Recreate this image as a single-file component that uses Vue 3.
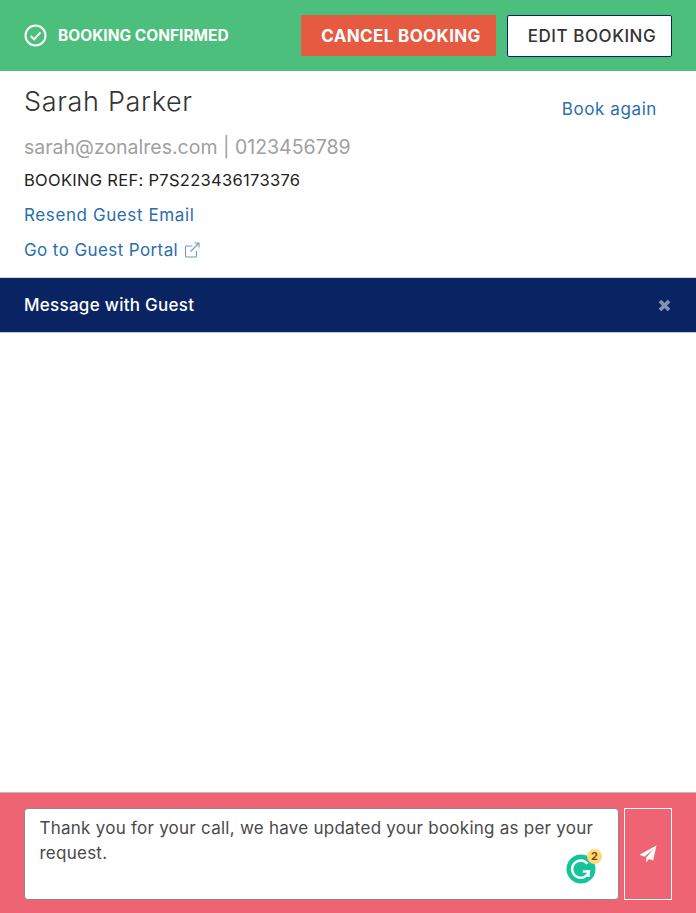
<template>
  <div class="page">
    <header class="status-bar">
      <div class="status">
        <svg class="check" viewBox="0 0 24 24" width="24" height="24" fill="none" stroke="#fff">
          <circle cx="11.5" cy="11.5" r="10" stroke-width="2" />
          <path d="M6.8 12l3.3 3.4 6.3-7" stroke-width="2" />
        </svg>
        <span>BOOKING CONFIRMED</span>
      </div>
      <button class="btn cancel">CANCEL BOOKING</button>
      <button class="btn edit">EDIT BOOKING</button>
    </header>

    <section class="guest">
      <div class="name-row">
        <h1>{{ guest.name }}</h1>
        <a class="link again">Book again</a>
      </div>
      <p class="contact">{{ guest.email }} | {{ guest.phone }}</p>
      <p class="ref">BOOKING REF: {{ guest.ref }}</p>
      <a class="link row">Resend Guest Email</a>
      <a class="link row portal">
        Go to Guest Portal
        <svg class="ext" viewBox="0 0 16 16" width="16" height="16" fill="none" stroke="#6a9cc6" stroke-width="1.1">
          <path d="M12.5 9v5a1 1 0 0 1-1 1h-9a1 1 0 0 1-1-1V5a1 1 0 0 1 1-1h6" />
          <path d="M10.5 1h4.5v4.5M15 1L6.5 9.5" />
        </svg>
      </a>
    </section>

    <div class="msg-bar">
      <span>Message with Guest</span>
      <svg class="close" viewBox="0 0 12 12" width="13" height="13" stroke="#8493b3" stroke-width="3.4">
        <path d="M1.8 1.8l8.4 8.4M10.2 1.8l-8.4 8.4" />
      </svg>
    </div>

    <div class="messages"></div>

    <footer class="composer">
      <div class="input-wrap">
        <textarea v-model="draft" spellcheck="false"></textarea>
        <div class="grammarly">
          <svg viewBox="0 0 30 30" width="30" height="30">
            <circle cx="15" cy="15" r="14.5" fill="#15c39a" />
            <path d="M21.5 9.8A8.6 8.6 0 1 0 23 17.5h-6.2" fill="none" stroke="#fff" stroke-width="2.4" />
            <path d="M22.6 16.5v6.5" fill="none" stroke="#fff" stroke-width="2.4" />
          </svg>
          <span class="badge">2</span>
        </div>
      </div>
      <button class="send" aria-label="Send">
        <svg viewBox="0 0 18 18" width="18" height="18" fill="#fff">
          <path d="M17.5 0.5L0.5 9.8l4.8 1.9L14.5 4 7.2 12.5v5l2.9-3.6 4 1.6z" />
        </svg>
      </button>
    </footer>
  </div>
</template>

<script setup>
import { ref } from 'vue';

const guest = {
  name: 'Sarah Parker',
  email: 'sarah@zonalres.com',
  phone: '0123456789',
  ref: 'P7S223436173376',
};

const draft = ref('Thank you for your call, we have updated your booking as per your request.');
</script>

<style>
html, body { margin: 0; background: #fff; }
</style>

<style scoped>
.page {
  height: 913px;
  display: flex;
  flex-direction: column;
  overflow: hidden;
  font-family: Inter, "Open Sans", sans-serif;
  color: #333;
}
.status-bar {
  height: 71px;
  flex: none;
  box-sizing: border-box;
  background: #4dbf7c;
  display: flex;
  align-items: center;
  padding: 0 24px;
}
.status {
  display: flex;
  align-items: center;
  gap: 10px;
  flex: 1;
  color: #fff;
  font-size: 15.5px;
  font-weight: 700;
  letter-spacing: 0;
}
.check { flex: none; }
.btn {
  height: 41px;
  box-sizing: border-box;
  font-family: inherit;
  font-size: 17px;
  padding: 0 0 0 5px;
  cursor: pointer;
}
.cancel {
  width: 195px;
  background: #e65a42;
  color: #fff;
  border: 0;
  font-weight: 700;
  letter-spacing: 0.35px;
}
.edit {
  width: 165px;
  height: 42px;
  margin-left: 11px;
  background: #fff;
  color: #333;
  border: 1px solid #0a2463;
  border-radius: 2px;
  font-weight: 500;
  letter-spacing: 0.55px;
}
.guest {
  height: 206px;
  flex: none;
  box-sizing: border-box;
  padding: 14px 24px 0;
}
.name-row {
  display: flex;
  justify-content: space-between;
  align-items: flex-start;
}
h1 {
  margin: 0;
  font-size: 27px;
  line-height: 33px;
  font-weight: 300;
  letter-spacing: 0.67px;
  color: #333;
}
.link {
  color: #2a6ead;
  font-size: 17px;
  line-height: 24px;
  letter-spacing: 0.6px;
}
.again {
  margin: 12px 15px 0 0;
}
.contact {
  margin: 13px 0 0;
  font-size: 19.5px;
  line-height: 26px;
  color: #a0a0a0;
}
.ref {
  margin: 8px 0 0;
  font-size: 16.5px;
  line-height: 24px;
  color: #222;
  letter-spacing: 0.3px;
}
.row {
  display: flex;
  align-items: center;
  gap: 6px;
  margin-top: 11px;
}
.portal { letter-spacing: 0.4px; }
.msg-bar {
  height: 56px;
  flex: none;
  box-sizing: border-box;
  border-top: 1px solid #d8d8d8;
  border-bottom: 1px solid #c8c8c8;
  background: #0a2463;
  color: #fff;
  display: flex;
  align-items: center;
  justify-content: space-between;
  padding: 0 25px 0 24px;
  font-size: 17px;
  font-weight: 500;
  letter-spacing: 0.28px;
}
.messages { flex: 1; }
.composer {
  height: 121px;
  flex: none;
  box-sizing: border-box;
  background: #ee6472;
  border-top: 1px solid #bdbdbd;
  padding: 15px 24px 13px;
  display: flex;
  align-items: stretch;
  gap: 5px;
}
.input-wrap {
  position: relative;
  flex: 1;
}
textarea {
  display: block;
  width: 100%;
  height: 100%;
  box-sizing: border-box;
  border: 1px solid #8a8a8a;
  border-radius: 4px;
  padding: 7px 14.5px;
  font-family: inherit;
  font-size: 17px;
  line-height: 25px;
  letter-spacing: 0.25px;
  color: #4a4a4a;
  resize: none;
  outline: none;
  background: #fff;
}
.grammarly {
  position: absolute;
  right: 23px;
  bottom: 16px;
  width: 30px;
  height: 30px;
}
.badge {
  position: absolute;
  top: -5px;
  right: -6px;
  width: 15px;
  height: 15px;
  border-radius: 50%;
  background: #ffd97a;
  color: #7a4a00;
  font-size: 11px;
  font-weight: 700;
  line-height: 15px;
  text-align: center;
}
.send {
  width: 48px;
  flex: none;
  background: #ee6472;
  border: 1px solid #fff;
  padding: 0;
  display: flex;
  align-items: center;
  justify-content: center;
  cursor: pointer;
}
</style>
